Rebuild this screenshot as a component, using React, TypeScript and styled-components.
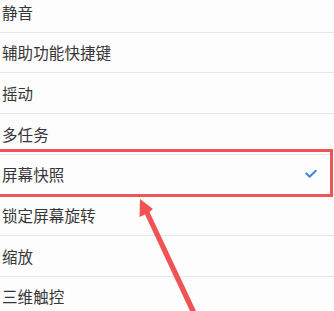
import React from 'react';
import styled, { createGlobalStyle } from 'styled-components';

const GlobalStyle = createGlobalStyle`
  html, body {
    margin: 0;
    padding: 0;
    background: #fdfdfd;
  }
  body {
    width: 334px;
    height: 311px;
    overflow: hidden;
    font-family: "Noto Sans CJK SC", "Noto Sans", sans-serif;
  }
`;

const Page = styled.div`
  position: relative;
  width: 334px;
  height: 311px;
  overflow: hidden;
  background: #fdfdfd;
`;

const List = styled.ul`
  list-style: none;
  margin: -8px 0 0 0;
  padding: 0;
  display: flex;
  flex-direction: column;
`;

const Row = styled.li<{ $highlighted?: boolean }>`
  position: relative;
  box-sizing: border-box;
  height: 40.67px;
  display: flex;
  align-items: center;
  justify-content: space-between;
  padding: 0 17px 0 2px;
  border-bottom: 1px solid #e8e8e8;
  color: #363636;
  font-size: 15.5px;
  letter-spacing: 0.1px;

  ${props =>
    props.$highlighted &&
    `
    &::after {
      content: '';
      position: absolute;
      left: -10px;
      right: 1px;
      top: -6px;
      bottom: -3px;
      border: 3px solid #ee5558;
      pointer-events: none;
    }
  `}
`;

const Label = styled.span`
  line-height: 1;
  padding-top: 1px;
`;

const Arrow = styled.svg`
  position: absolute;
  left: 0;
  top: 0;
  pointer-events: none;
`;

const items = [
  '静音',
  '辅助功能快捷键',
  '摇动',
  '多任务',
  '屏幕快照',
  '锁定屏幕旋转',
  '缩放',
  '三维触控'
];

const Check = () => (
  <svg width="12" height="9" viewBox="0 0 12 9">
    <path
      d="M1.2 3.4 L4.6 6.8 L10.8 0.8"
      fill="none"
      stroke="#3b86e8"
      strokeWidth="2"
      strokeLinecap="round"
      strokeLinejoin="round"
    />
  </svg>
);

export default function App() {
  return (
    <Page>
      <GlobalStyle />
      <List>
        {items.map(item => (
          <Row key={item} $highlighted={item === '屏幕快照'}>
            <Label>{item}</Label>
            {item === '屏幕快照' && <Check />}
          </Row>
        ))}
      </List>
      <Arrow width="334" height="311" viewBox="0 0 334 311">
        <polygon
          points="140,199 153,209 149.5,212 196,311 190,311 145,214.5 139.5,217"
          fill="#f05356"
        />
      </Arrow>
    </Page>
  );
}
